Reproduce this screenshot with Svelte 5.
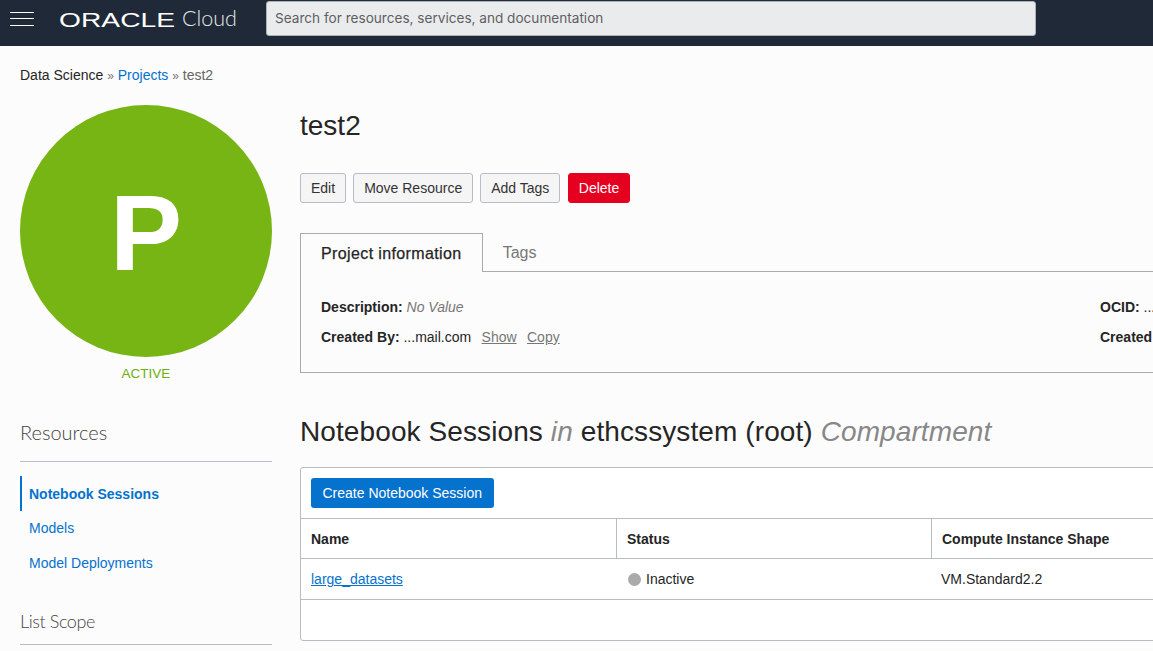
<script>
  const buttons = ['Edit', 'Move Resource', 'Add Tags'];
  const resources = ['Notebook Sessions', 'Models', 'Model Deployments'];
</script>

<div class="page">
  <header class="topbar">
    <button class="burger" aria-label="Menu">
      <span></span><span></span><span></span>
    </button>
    <div class="logo">
      <svg width="116" height="24" viewBox="0 0 116 24">
        <text x="-1" y="19.5" textLength="116" lengthAdjust="spacingAndGlyphs">ORACLE</text>
      </svg>
      <span class="cloud">Cloud</span>
    </div>
    <div class="search">Search for resources, services, and documentation</div>
  </header>

  <div class="content">
    <aside class="side">
      <div class="crumbs">
        <span>Data Science</span> <i>»</i> <a href="#p">Projects</a> <i>»</i> <em>test2</em>
      </div>
      <div class="avatar">P</div>
      <div class="state">ACTIVE</div>

      <h3 class="side-title first">Resources</h3>
      <ul>
        {#each resources as r, i}
          <li class:active={i === 0}><a href="#r">{r}</a></li>
        {/each}
      </ul>
      <h3 class="side-title">List Scope</h3>
    </aside>

    <main class="main">
      <h1>test2</h1>
      <div class="actions">
        {#each buttons as b}
          <button class="btn">{b}</button>
        {/each}
        <button class="btn danger">Delete</button>
      </div>

      <div class="tabs">
        <div class="tab on">Project information</div>
        <div class="tab">Tags</div>
      </div>
      <div class="info">
        <div class="info-col">
          <p><b>Description:</b> <em>No Value</em></p>
          <p><b>Created By:</b> ...mail.com <u>Show</u> <u>Copy</u></p>
        </div>
        <div class="info-col right">
          <p><b>OCID:</b> ...</p>
          <p><b>Created</b></p>
        </div>
      </div>

      <h2>Notebook Sessions <em>in</em> ethcssystem (root) <em>Compartment</em></h2>

      <div class="card">
        <div class="toolbar">
          <button class="primary">Create Notebook Session</button>
        </div>
        <div class="row head">
          <div class="c1">Name</div>
          <div class="c2">Status</div>
          <div class="c3">Compute Instance Shape</div>
        </div>
        <div class="row">
          <div class="c1"><a href="#n">large_datasets</a></div>
          <div class="c2"><span class="dot"></span>Inactive</div>
          <div class="c3">VM.Standard2.2</div>
        </div>
        <div class="empty"></div>
      </div>
    </main>
  </div>
</div>

<style>
  :global(body) {
    margin: 0;
    background: #fcfcfc;
    overflow: hidden;
  }

  .page {
    width: 1153px;
    height: 651px;
    overflow: hidden;
    font-family: "Liberation Sans", Arial, sans-serif;
    font-size: 14px;
    color: #252525;
  }

  .topbar {
    height: 46px;
    background: #1f2937;
    display: flex;
    align-items: center;
    box-sizing: border-box;
    padding-left: 10px;
  }

  .burger {
    width: 24px;
    height: 14px;
    padding: 0;
    margin-bottom: 9px;
    border: none;
    background: none;
    display: flex;
    flex-direction: column;
    justify-content: space-between;
  }

  .burger span {
    display: block;
    height: 1px;
    background: #fff;
  }

  .logo {
    display: flex;
    align-items: center;
    margin-left: 26px;
    margin-bottom: 8px;
    width: 206px;
    flex: none;
  }

  .logo svg {
    flex: none;
    overflow: visible;
  }

  .logo text {
    font-family: "Liberation Sans", Arial, sans-serif;
    font-size: 21px;
    fill: #fff;
  }

  .cloud {
    margin-left: 6px;
    margin-bottom: 3px;
    font-family: Lato, sans-serif;
    font-weight: 300;
    font-size: 21.5px;
    line-height: 24px;
    color: #e8e8e8;
  }

  .search {
    width: 770px;
    height: 35px;
    box-sizing: border-box;
    margin-bottom: 10px;
    border-radius: 3px;
    border: 1px solid #aeb2b8;
    background: #eaebed;
    color: #5f5f5f;
    font-family: Inter, sans-serif;
    font-size: 13.6px;
    line-height: 33px;
    padding-left: 8px;
  }

  .content {
    display: flex;
    padding-left: 20px;
  }

  .side {
    width: 252px;
    flex: none;
  }

  .crumbs {
    height: 59px;
    padding-top: 21px;
    box-sizing: border-box;
    line-height: 16px;
    white-space: nowrap;
  }

  .crumbs i {
    font-style: normal;
    font-size: 12px;
    color: #777;
  }

  .crumbs a,
  li a {
    color: #0572ce;
    text-decoration: none;
  }

  .crumbs em {
    font-style: normal;
    color: #666;
  }

  .avatar {
    width: 252px;
    height: 252px;
    border-radius: 50%;
    background: #77b514;
    color: #fff;
    font-size: 108px;
    font-weight: 700;
    text-align: center;
    line-height: 256px;
  }

  .state {
    margin-top: 9px;
    text-align: center;
    color: #6fae10;
    font-size: 13.5px;
    line-height: 16px;
  }

  .side-title {
    margin: 28px 0 0;
    font-family: Lato, sans-serif;
    font-weight: 300;
    font-size: 18px;
    letter-spacing: -0.4px;
    line-height: 24px;
    height: 36px;
    color: #444;
    border-bottom: 1px solid #b6bcc8;
    box-sizing: border-box;
  }

  .side-title.first {
    margin-top: 38px;
    height: 42px;
    font-size: 20px;
    letter-spacing: 0;
  }

  ul {
    list-style: none;
    margin: 14px 0 0;
    padding: 0;
  }

  li {
    height: 35px;
    line-height: 34px;
    padding-left: 9px;
  }

  li.active {
    border-left: 2px solid #0572ce;
    padding-left: 7px;
    line-height: 36px;
    font-weight: 700;
  }

  .main {
    width: 1100px;
    margin-left: 28px;
    flex: none;
  }

  h1 {
    margin: 0;
    height: 127px;
    padding-top: 65px;
    box-sizing: border-box;
    font-weight: 400;
    font-size: 28px;
    line-height: 30px;
    color: #252525;
  }

  .actions {
    display: flex;
    gap: 7px;
  }

  .btn {
    height: 30px;
    padding: 0 10px;
    border: 1px solid #b6bcc8;
    border-radius: 3px;
    background: #f5f5f6;
    color: #333;
    font-family: inherit;
    font-size: 14px;
  }

  .btn.danger {
    margin-left: 1px;
    padding: 0 9.5px;
    background: #e6001f;
    border-color: #e6001f;
    color: #fff;
  }

  .tabs {
    display: flex;
    margin-top: 30px;
    height: 38px;
    border-bottom: 1px solid #aaa;
  }

  .tab {
    padding: 0 20px;
    font-size: 16px;
    line-height: 40px;
    color: #777;
  }

  .tab.on {
    border: 1px solid #aaa;
    border-bottom: none;
    height: 38px;
    background: #fcfcfc;
    color: #252525;
    letter-spacing: 0.38px;
    -webkit-text-stroke: 0.25px #252525;
  }

  .info {
    display: flex;
    height: 101px;
    box-sizing: border-box;
    padding: 27px 20px 0;
    border-left: 1px solid #aaa;
    border-bottom: 1px solid #aaa;
  }

  .info-col {
    width: 779px;
    flex: none;
  }

  .info-col p {
    margin: 0 0 14px;
    line-height: 16px;
    white-space: nowrap;
  }

  .info-col em {
    color: #777;
  }

  .info-col u {
    color: #777;
    margin-left: 6.5px;
  }

  h2 {
    margin: 41px 0 0;
    font-weight: 400;
    font-size: 28px;
    line-height: 36px;
    letter-spacing: 0.1px;
    color: #252525;
    white-space: nowrap;
  }

  h2 em {
    color: #888;
  }

  .card {
    margin-top: 17px;
    height: 174px;
    box-sizing: border-box;
    border: 1px solid #b6bcc8;
    border-radius: 3px;
    background: #fff;
  }

  .toolbar {
    height: 51px;
    padding: 10px;
    box-sizing: border-box;
    border-bottom: 1px solid #b6bcc8;
  }

  .primary {
    height: 30px;
    padding: 0 11.5px;
    border: none;
    border-radius: 3px;
    background: #0572ce;
    color: #fff;
    font-family: inherit;
    font-size: 14px;
  }

  .row {
    display: flex;
    height: 41px;
    line-height: 40px;
    box-sizing: border-box;
    border-bottom: 1px solid #b6bcc8;
  }

  .row.head {
    height: 40px;
    font-weight: 700;
  }

  .c1 {
    width: 315px;
    padding-left: 10px;
    box-sizing: border-box;
  }

  .c2 {
    width: 315px;
    padding-left: 10px;
    box-sizing: border-box;
    display: flex;
    align-items: center;
  }

  .c3 {
    padding-left: 10px;
  }

  .head .c2 {
    border-left: 1px solid #b6bcc8;
  }

  .head .c3 {
    border-left: 1px solid #b6bcc8;
  }

  .c1 a {
    color: #0572ce;
  }

  .dot {
    width: 13px;
    height: 13px;
    border-radius: 50%;
    background: #aaa;
    margin: 0 5px 0 2px;
  }
</style>
